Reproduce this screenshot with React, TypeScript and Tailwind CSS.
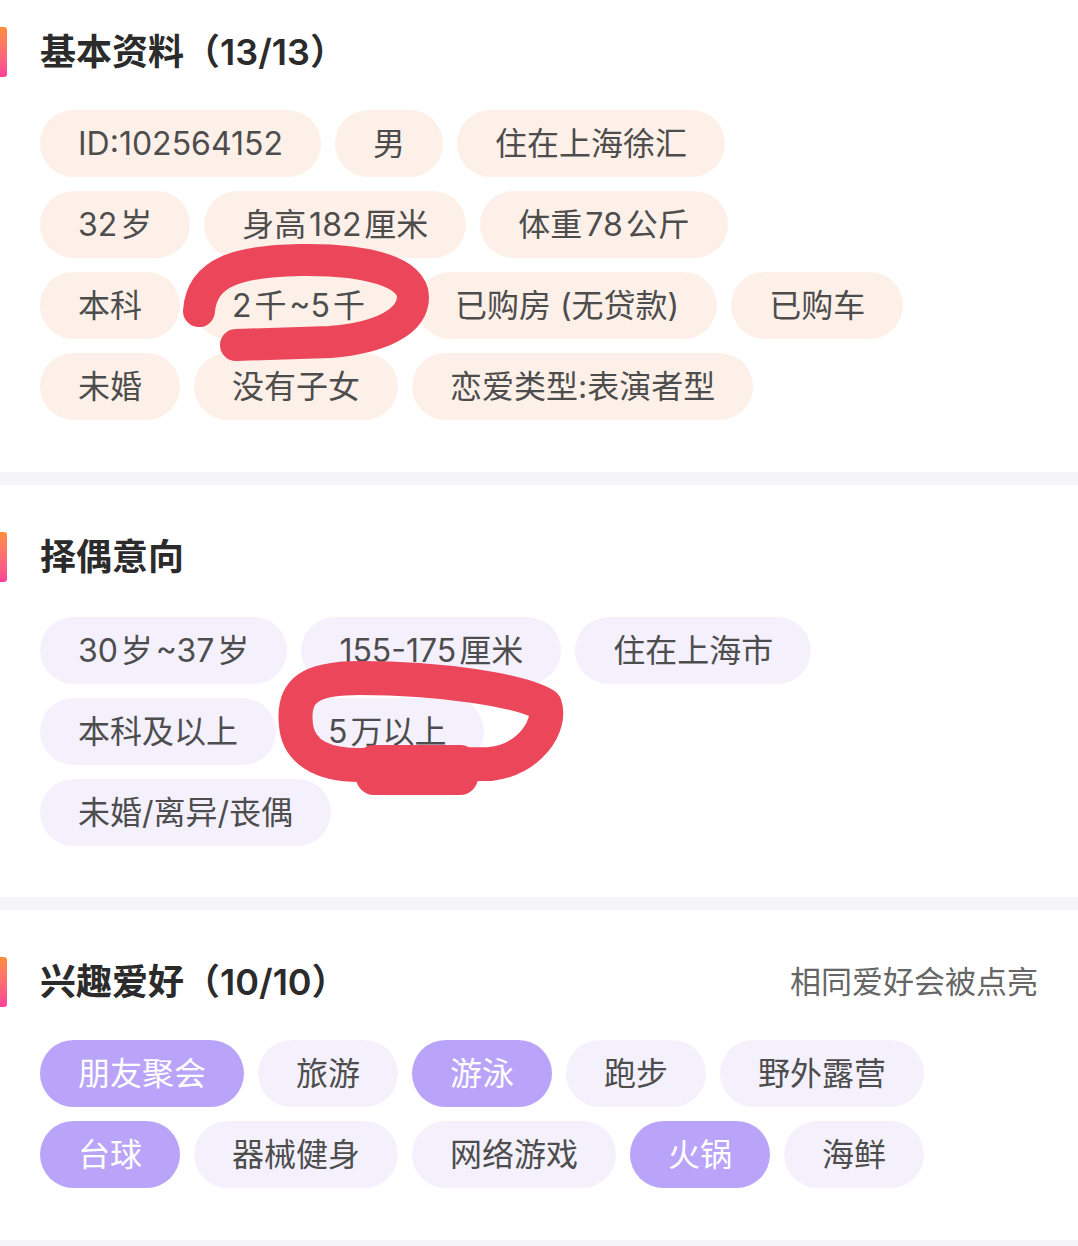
const T = "\u200A";

type Tone = "peach" | "lilac" | "active";

const basicRows: string[][] = [
  ["ID:102564152", "男", "住在上海徐汇"],
  [`32${T}岁`, `身高${T}182${T}厘米`, `体重${T}78${T}公斤`],
  ["本科", `2${T}千${T}~5${T}千`, "已购房 (无贷款)", "已购车"],
  ["未婚", "没有子女", "恋爱类型:表演者型"],
];

const wishRows: string[][] = [
  [`30${T}岁${T}~37${T}岁`, `155-175${T}厘米`, "住在上海市"],
  ["本科及以上", `5${T}万以上`],
  ["未婚/离异/丧偶"],
];

const hobbyRows: [string, boolean][][] = [
  [["朋友聚会", true], ["旅游", false], ["游泳", true], ["跑步", false], ["野外露营", false]],
  [["台球", true], ["器械健身", false], ["网络游戏", false], ["火锅", true], ["海鲜", false]],
];

function Tag({ text, tone }: { text: string; tone: Tone }) {
  const toneClass =
    tone === "peach"
      ? "bg-[#fdf0e8] text-[#4d4d4d]"
      : tone === "lilac"
      ? "bg-[#f4f1fd] text-[#4d4d4d]"
      : "bg-[#b9a4fa] text-white";
  return (
    <div className={`flex h-[67px] items-center whitespace-nowrap rounded-full px-[38px] text-[32px] ${toneClass}`}>
      {text}
    </div>
  );
}

function Header({ title, count, note }: { title: string; count?: string; note?: string }) {
  return (
    <div className="flex h-[50px] items-center">
      <div className="h-[50px] w-[7px] rounded-r-[3px] bg-gradient-to-b from-[#ff8d3a] to-[#ff3f97]" />
      <h2 className="ml-[33px] text-[36px] font-bold leading-[50px] text-[#2b2b2b]">
        {title}
        {count && <span className="font-semibold">{count}</span>}
      </h2>
      {note && <span className="ml-auto pr-[40px] text-[31px] text-[#666666]">{note}</span>}
    </div>
  );
}

function Rows({ children }: { children: React.ReactNode }) {
  return <div className="flex flex-col gap-[14px] px-10">{children}</div>;
}

export default function App() {
  return (
    <div className="relative w-[1078px] h-[1246px] overflow-hidden bg-white font-[Inter,'Noto_Sans_CJK_SC',sans-serif]">
      {/* 基本资料 */}
      <section className="pt-[27px] pb-[52px]">
        <Header title="基本资料" count="（13/13）" />
        <div className="mt-[33px]">
          <Rows>
            {basicRows.map((row, i) => (
              <div key={i} className="flex gap-[14px]">
                {row.map((t) => (
                  <Tag key={t} text={t} tone="peach" />
                ))}
              </div>
            ))}
          </Rows>
        </div>
      </section>
      <div className="h-[13px] bg-[#f5f5f7]" />

      {/* 择偶意向 */}
      <section className="pt-[47px] pb-[51px]">
        <Header title="择偶意向" />
        <div className="mt-[35px]">
          <Rows>
            {wishRows.map((row, i) => (
              <div key={i} className="flex gap-[14px]">
                {row.map((t) => (
                  <Tag key={t} text={t} tone="lilac" />
                ))}
              </div>
            ))}
          </Rows>
        </div>
      </section>
      <div className="h-[13px] bg-[#f5f5f7]" />

      {/* 兴趣爱好 */}
      <section className="pt-[47px] pb-[52px]">
        <Header title="兴趣爱好" count="（10/10）" note="相同爱好会被点亮" />
        <div className="mt-[33px]">
          <Rows>
            {hobbyRows.map((row, i) => (
              <div key={i} className="flex gap-[14px]">
                {row.map(([t, on]) => (
                  <Tag key={t} text={t} tone={on ? "active" : "lilac"} />
                ))}
              </div>
            ))}
          </Rows>
        </div>
      </section>
      <div className="h-[13px] bg-[#f5f5f7]" />

      {/* hand-drawn marks */}
      <svg
        className="pointer-events-none absolute left-0 top-0"
        width="1078"
        height="1246"
        viewBox="0 0 1078 1246"
        fill="none"
      >
        <path
          d="M199 311 C202 271 240 261 300 260 C370 259 413 273 413 297 C413 322 380 338 330 342 L236 345"
          stroke="#eb4659"
          strokeWidth="32"
          strokeLinecap="round"
          strokeLinejoin="round"
        />
        <path
          d="M296 725 C292 690 310 678 360 678 C440 678 520 690 545 705 C552 725 530 760 490 764 L360 765 C320 765 298 750 296 725 Z"
          stroke="#eb4659"
          strokeWidth="34"
          strokeLinejoin="round"
        />
        <rect x="356" y="745" width="122" height="50" rx="18" fill="#eb4659" />
      </svg>
    </div>
  );
}
